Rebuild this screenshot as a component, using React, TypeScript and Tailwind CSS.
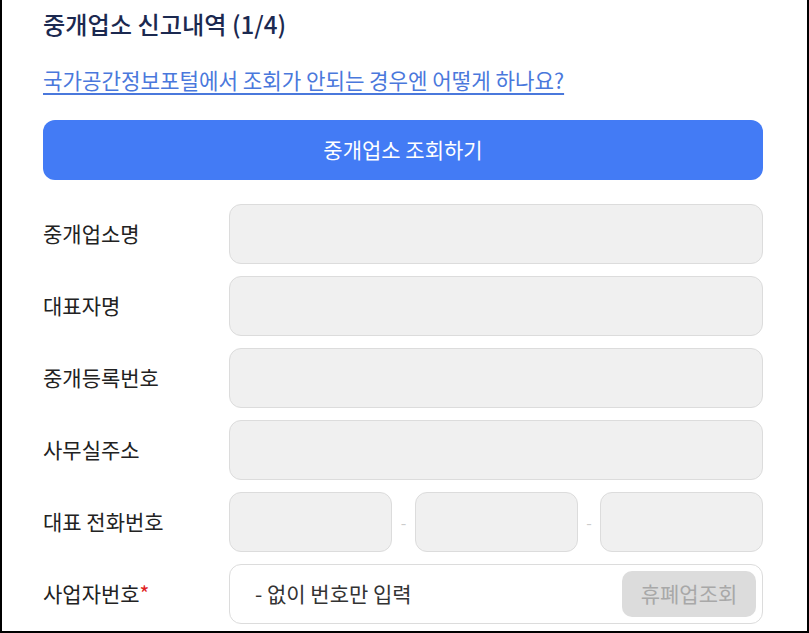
import React from 'react';

const font = { fontFamily: '"Noto Sans CJK KR", "Noto Sans", sans-serif' };

const Field = ({ label, required, children }: { label: string; required?: boolean; children: React.ReactNode }) => (
  <div className="flex items-center h-[60px]">
    <div className="w-[186px] shrink-0 text-[21px] text-[#222]">
      {label}
      {required && <span className="text-[#e02020]">*</span>}
    </div>
    <div className="flex-1 flex items-center h-full">{children}</div>
  </div>
);

const Box = ({ className = '' }: { className?: string }) => (
  <div className={`h-full rounded-[12px] border border-[#dcdcdc] bg-[#f0f0f0] ${className}`} />
);

export default function App() {
  return (
    <div style={font} className="w-[809px] h-[633px] overflow-hidden bg-white border-l-2 border-r-2 border-b-2 border-black pl-[41px] pr-[44px]">
      <h1 className="pt-[7px] h-[40px] text-[24.2px] leading-[34px] font-medium text-[#1b2950]">중개업소 신고내역 (1/4)</h1>
      <a href="#" className="block mt-[25px] text-[21.2px] leading-[30px] text-[#4a78dc] underline underline-offset-[4px]">
        국가공간정보포털에서 조회가 안되는 경우엔 어떻게 하나요?
      </a>
      <button className="mt-[25px] w-full h-[60px] rounded-[12px] bg-[#437bf5] text-white text-[21px]">
        중개업소 조회하기
      </button>
      <div className="mt-[24px] flex flex-col gap-[12px]">
        <Field label="중개업소명"><Box className="w-full" /></Field>
        <Field label="대표자명"><Box className="w-full" /></Field>
        <Field label="중개등록번호"><Box className="w-full" /></Field>
        <Field label="사무실주소"><Box className="w-full" /></Field>
        <Field label="대표 전화번호">
          <Box className="flex-1" />
          <span className="w-[23px] text-center text-[#ccc] text-[16px]">-</span>
          <Box className="flex-1" />
          <span className="w-[22px] text-center text-[#ccc] text-[16px]">-</span>
          <Box className="flex-1" />
        </Field>
        <Field label="사업자번호" required>
          <div className="w-full h-full rounded-[12px] border border-[#dcdcdc] bg-white flex items-center pl-[25px] pr-[6px]">
            <span className="flex-1 text-[21px] text-[#333]">- 없이 번호만 입력</span>
            <button className="w-[134px] h-[46px] rounded-[10px] bg-[#dcdcdc] text-[#a8a8a8] text-[21px]">휴폐업조회</button>
          </div>
        </Field>
      </div>
    </div>
  );
}
